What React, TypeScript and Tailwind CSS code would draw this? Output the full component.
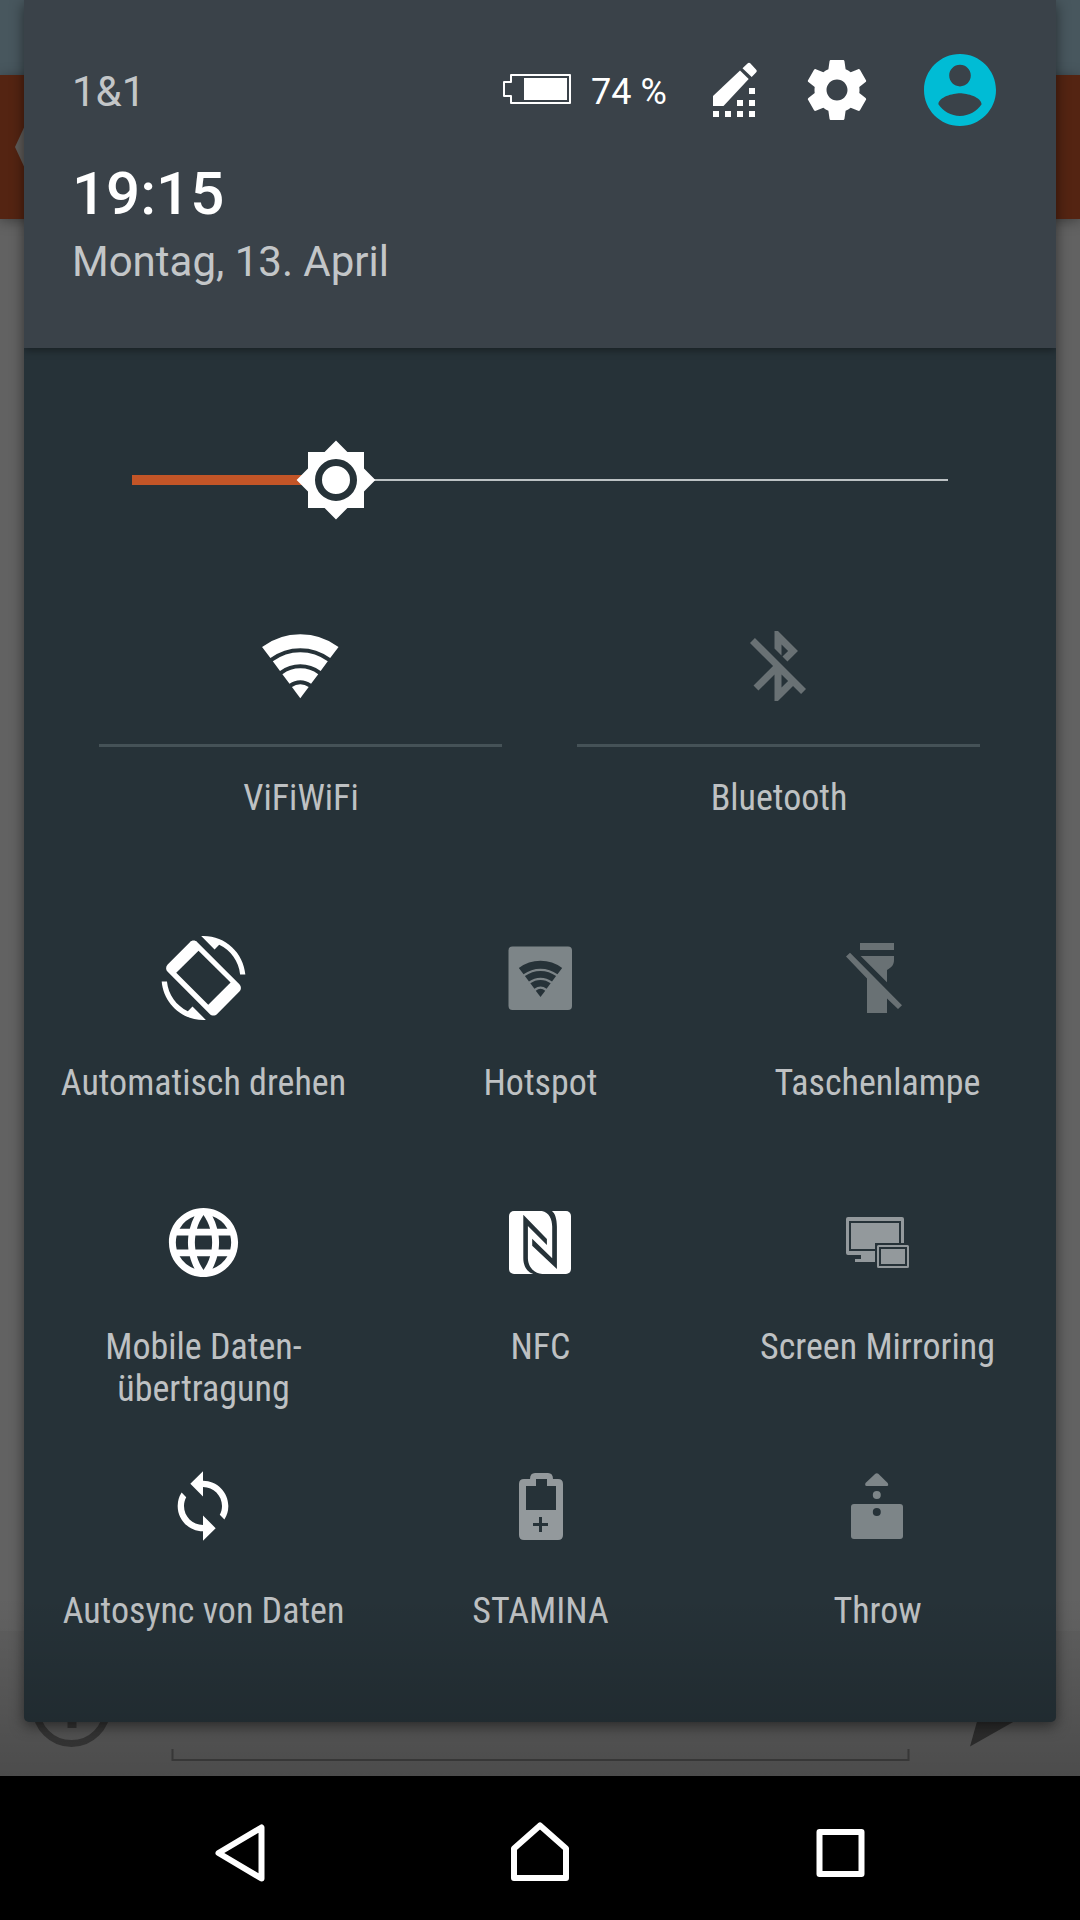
import type { ReactNode } from "react"
import { clsx } from "clsx"
import { MdBluetoothDisabled, MdLanguage, MdSync } from "react-icons/md"

function WifiFan() {
  // Four bands around an apex at 0,0; outer radius 64
  return (
    <g fill="none" stroke="currentColor">
      <path d="M-34.06 -45.7A57 57 0 0 1 34.06 -45.7" strokeWidth="14" />
      <path d="M-23.9 -32.07A40 40 0 0 1 23.9 -32.07" strokeWidth="12" />
      <path d="M-14.34 -19.24A24 24 0 0 1 14.34 -19.24" strokeWidth="12" />
      <path d="M0 0L-8.37 -11.22A14 14 0 0 1 8.37 -11.22Z" fill="currentColor" stroke="none" />
    </g>
  )
}

function WifiIcon() {
  return (
    <svg width="84" height="84" viewBox="0 0 84 84">
      <g transform="translate(42.3 74.2)">
        <WifiFan />
      </g>
    </svg>
  )
}

function HotspotIcon() {
  return (
    <svg width="84" height="84" viewBox="0 0 84 84">
      <rect x="10.5" y="10.5" width="63.5" height="63.5" rx="4" fill="currentColor" />
      <g className="text-[#263238]" transform="translate(42.5 61) scale(0.567)">
        <WifiFan />
      </g>
    </svg>
  )
}

function RotateIcon() {
  return (
    <svg width="84" height="84" viewBox="-0.15 0 24 24" fill="currentColor" fillRule="evenodd" overflow="visible">
      <path d="M16.48 2.52c3.27 1.55 5.61 4.72 5.97 8.48h1.5C23.44 4.84 18.29 0 12 0l-.66.03 3.81 3.81 1.33-1.32z" />
      <path d="M7.52 21.48C4.25 19.94 1.91 16.76 1.55 13H.05C.56 19.16 5.71 24 12 24l.66-.03-3.81-3.81-1.33 1.32z" />
      <path d="M10.23 1.75c-.59-.59-1.54-.59-2.12 0L1.75 8.11c-.59.59-.59 1.54 0 2.12l12.02 12.02c.59.59 1.54.59 2.12 0l6.36-6.36c.59-.59.59-1.54 0-2.12L10.23 1.75zM10.57 4.2L4.2 10.5l9.15 9.15 6.38-6.4z" />
    </svg>
  )
}

function TorchOffIcon() {
  return (
    <svg width="84" height="84" viewBox="0 0 84 84" fill="currentColor">
      <path d="M25 7H59V14H25Z" />
      <path d="M25.7 20H59V24C59 29 56.5 31.5 52 34V46.3Z" />
      <path d="M11 20.5L15 16.7L67 69.2L63 73L52 62.5V77H32V42.5Z" />
    </svg>
  )
}

function NfcIcon() {
  return (
    <svg width="84" height="84" viewBox="0 0 84 84">
      <g transform="translate(11 11)">
        <rect width="62" height="63" rx="5" fill="currentColor" />
        <path
          className="fill-[#263238]"
          d="M14.3 3.7L37.9 28V33.9L18.9 15V47.3C18.9 55 24 62 33.2 63H24.3C17.5 61 14.3 54 14.3 47.3Z"
        />
        <path
          className="fill-[#263238]"
          d="M47.9 58L23.2 34.7V27.7L43.2 47.3V15.7C43.2 8 40 1.5 32.9 0H42.9C46 2 47.9 8 47.9 15.7Z"
        />
      </g>
    </svg>
  )
}

function MirrorIcon() {
  return (
    <svg width="84" height="84" viewBox="0 0 84 84" fill="currentColor" fillRule="evenodd">
      <g transform="translate(11 17)">
        <path d="M2 0H56Q58 0 58 2V26H55V4H3V34H29V45H9V42H15V38H2Q0 38 0 36V2Q0 0 2 0Z" />
        <path d="M5 6H53V26H29V32H5Z" />
        <path d="M32.5 28H61.5Q63 28 63 29.5V49.5Q63 51 61.5 51H32.5Q31 51 31 49.5V29.5Q31 28 32.5 28ZM33 30V49H61V30Z" />
        <path d="M35 32H59V47H35Z" />
      </g>
    </svg>
  )
}

function StaminaIcon() {
  return (
    <svg width="84" height="84" viewBox="0 0 84 84" fill="currentColor" fillRule="evenodd">
      <path
        transform="translate(21 9)"
        d="M16 0H29Q34 0 34 6H39Q44 6 44 11V62Q44 67 39 67H5Q0 67 0 62V11Q0 6 5 6H11Q11 0 16 0ZM17 6V13H7V37H37V13H28V6ZM20 44V50H14V53H20V59H23V53H29V50H23V44Z"
      />
    </svg>
  )
}

function ThrowIcon() {
  return (
    <svg width="84" height="84" viewBox="0 0 84 84" fill="currentColor">
      <g transform="translate(16 9)">
        <path d="M24.3 .7Q25.8 -.3 27.3 .7L36.7 10Q38 13 36 13H15.6Q13.5 13 14.5 10Z" />
        <circle cx="25.8" cy="22" r="4" />
        <rect y="31" width="52" height="35" rx="3" />
        <circle className="fill-[#263238]" cx="25.8" cy="39" r="4" />
      </g>
    </svg>
  )
}

function BatteryIcon() {
  return (
    <svg width="68" height="30" viewBox="0 0 68 30" fill="none">
      <path d="M8 1H67V29H8V22H1V8H8Z" stroke="white" strokeWidth="2" strokeLinejoin="round" />
      <path d="M21 4H64V26H21Z" fill="white" />
    </svg>
  )
}

function EditIcon() {
  return (
    <svg width="44" height="56" viewBox="0 0 44 56" fill="white">
      <path d="M0 34L27 8.5L35.7 17L10.5 44H0Z" />
      <path d="M34.5 1.5Q36 0 37.5 1.5L43 7.5Q44.5 9 43 10.5L38.7 15L29.5 6.2Z" />
      <path d="M36 26h6v6h-6zM24 38h6v6h-6zM36 38h6v6h-6zM0 49h6v6h-6zM12 49h6v6h-6zM24 49h6v6h-6zM36 49h6v6h-6z" />
    </svg>
  )
}

function GearIcon() {
  return (
    <svg width="60" height="60" viewBox="2 2 20 20" fill="white">
      <path d="M19.43 12.98c.04-.32.07-.64.07-.98s-.03-.66-.07-.98l2.11-1.65c.19-.15.24-.42.12-.64l-2-3.46c-.12-.22-.39-.3-.61-.22l-2.49 1c-.52-.4-1.08-.73-1.69-.98l-.38-2.65C14.46 2.18 14.25 2 14 2h-4c-.25 0-.46.18-.49.42l-.38 2.65c-.61.25-1.17.59-1.69.98l-2.49-1c-.23-.09-.49 0-.61.22l-2 3.46c-.13.22-.07.49.12.64l2.11 1.65c-.04.32-.07.65-.07.98s.03.66.07.98l-2.11 1.65c-.19.15-.24.42-.12.64l2 3.46c.12.22.39.3.61.22l2.49-1c.52.4 1.08.73 1.69.98l.38 2.65c.03.24.24.42.49.42h4c.25 0 .46-.18.49-.42l.38-2.65c.61-.25 1.17-.59 1.69-.98l2.49 1c.23.09.49 0 .61-.22l2-3.46c.12-.22.07-.49-.12-.64l-2.11-1.65zM12 15.5c-1.93 0-3.5-1.57-3.5-3.5s1.57-3.5 3.5-3.5 3.5 1.57 3.5 3.5-1.57 3.5-3.5 3.5z" />
    </svg>
  )
}

function AccountIcon() {
  return (
    <svg width="72" height="72" viewBox="2 2 20 20" fill="#00bcd5">
      <path d="M12 2C6.48 2 2 6.48 2 12s4.48 10 10 10 10-4.48 10-10S17.52 2 12 2zm0 3c1.66 0 3 1.34 3 3s-1.34 3-3 3-3-1.34-3-3 1.34-3 3-3zm0 14.2c-2.5 0-4.71-1.28-6-3.22.03-1.99 4-3.08 6-3.08 1.99 0 5.97 1.09 6 3.08-1.29 1.94-3.5 3.22-6 3.22z" />
    </svg>
  )
}

const labelClass =
  "pl-px text-center font-['Roboto_Condensed','Roboto',sans-serif] font-stretch-75% text-[36px] leading-[42px] text-[#bec1c3] whitespace-pre-line"

interface Tile {
  label: string
  icon: ReactNode
  color: string
}

const wideTiles: Tile[] = [
  { label: "ViFiWiFi", icon: <WifiIcon />, color: "text-white" },
  { label: "Bluetooth", icon: <MdBluetoothDisabled size={84} />, color: "text-[#697174]" },
]

const tiles: Tile[] = [
  { label: "Automatisch drehen", icon: <RotateIcon />, color: "text-white" },
  { label: "Hotspot", icon: <HotspotIcon />, color: "text-[#7d8588]" },
  { label: "Taschenlampe", icon: <TorchOffIcon />, color: "text-[#697174]" },
  { label: "Mobile Daten-\nübertragung", icon: <MdLanguage size={83} />, color: "text-white" },
  { label: "NFC", icon: <NfcIcon />, color: "text-white" },
  { label: "Screen Mirroring", icon: <MirrorIcon />, color: "text-[#93999c]" },
  { label: "Autosync von Daten", icon: <MdSync size={76} />, color: "text-white" },
  { label: "STAMINA", icon: <StaminaIcon />, color: "text-[#93999c]" },
  { label: "Throw", icon: <ThrowIcon />, color: "text-[#7d8588]" },
]

function Header() {
  return (
    <header className="relative z-10 h-[348px] bg-[#3a4249] pl-[48px] pt-[54px] shadow-[0_2px_8px_rgba(0,0,0,0.4)]">
      <div className="flex h-[72px] items-center pr-[60px] text-white">
        <span className="pt-[3px] text-[42px] leading-[48px] text-[#c3c6c8]">1&amp;1</span>
        <div className="ml-auto flex items-center">
          <div className="pb-[2px]">
            <BatteryIcon />
          </div>
          <span className="ml-[20px] w-[75px] whitespace-nowrap pt-[4px] text-[36px] leading-[42px]">
            74 %
          </span>
          <div className="ml-[47px]">
            <EditIcon />
          </div>
          <div className="ml-[50px]">
            <GearIcon />
          </div>
          <div className="ml-[57px]">
            <AccountIcon />
          </div>
        </div>
      </div>
      <p className="mt-[32px] text-[60px] font-medium leading-[72px] text-white">19:15</p>
      <p className="mt-[8px] text-[42px] leading-[48px] text-[#c3c6c8]">Montag, 13. April</p>
    </header>
  )
}

function BrightnessSlider({ value }: { value: number }) {
  return (
    <div className="relative mx-[108px] mt-[90px] flex h-[84px] items-center">
      <div className="h-[10px] bg-[#c35527]" style={{ width: `${value}%` }} />
      <div className="h-[2px] flex-1 bg-[#bcc2c4]" />
      <svg
        className="absolute top-0 -translate-x-1/2"
        style={{ left: `${value}%` }}
        width="84"
        height="84"
        viewBox="-42 -42 84 84"
      >
        <path
          d="M-28 -28H-11.4L0 -39.4L11.4 -28H28V-11.4L39.4 0L28 11.4V28H11.4L0 39.4L-11.4 28H-28V11.4L-39.4 0L-28 -11.4Z"
          fill="white"
        />
        <circle r="17.5" fill="none" stroke="#263238" strokeWidth="7" />
      </svg>
    </div>
  )
}

function NavigationBar() {
  return (
    <nav className="flex h-[144px] items-center justify-center gap-[216px] bg-black pt-[16px]">
      <svg width="84" height="84" viewBox="0 0 84 84" fill="none" stroke="white" strokeWidth="6" strokeLinejoin="round">
        <path d="M63.5 13.5V64.5L20.5 39Z" />
      </svg>
      <svg width="84" height="84" viewBox="0 0 84 84" fill="none" stroke="white" strokeWidth="6" strokeLinejoin="round">
        <path d="M42 11.5L68 34.5V64H16V34.5Z" />
      </svg>
      <svg width="84" height="84" viewBox="0 0 84 84" fill="none" stroke="white" strokeWidth="6" strokeLinejoin="round">
        <path d="M21.5 18H63.5V60H21.5Z" />
      </svg>
    </nav>
  )
}

function DimmedApp() {
  return (
    <div className="flex h-[1776px] flex-col">
      <div className="h-[75px] bg-[#48575e]" />
      <div className="relative h-[144px] bg-[#542412] shadow-[0_2px_12px_rgba(0,0,0,0.35)]">
        <svg className="absolute left-[15px] top-[46px]" width="26" height="52" viewBox="0 0 26 52">
          <path d="M0 26L12 0H26V52H12Z" fill="#5f5c59" />
        </svg>
      </div>
      <div className="flex-1 bg-[#626262]" />
      <div className="relative h-[145px] bg-[#5f5f5f]">
        <svg width="1080" height="145" viewBox="0 1631 1080 145" fill="none">
          <circle cx="71.5" cy="1708" r="35.5" stroke="#3c3c3c" strokeWidth="7" />
          <path d="M67.5 1690H76.5V1728H67.5Z" fill="#3c3c3c" />
          <path d="M172.5 1749V1760H908.5V1749" stroke="#434343" strokeWidth="2" />
          <path d="M983 1700L1045 1704L970 1746.5Z" fill="#333333" />
        </svg>
        <span className="absolute left-[202px] top-[58px] text-[36px] leading-[42px] text-[#454545]">
          Schreib eine Nachricht
        </span>
      </div>
    </div>
  )
}

export default function App() {
  return (
    <div className="relative h-[1920px] w-[1080px] overflow-hidden font-['Roboto',sans-serif]">
      <DimmedApp />
      <NavigationBar />

      {/* Quick settings shade */}
      <section className="absolute left-[24px] top-0 h-[1722px] w-[1032px] overflow-clip rounded-b-[5px] bg-[#263238] shadow-[0_4px_14px_rgba(0,0,0,0.5)]">
        <Header />
        <BrightnessSlider value={25} />

        <div className="mt-[102px] flex justify-center gap-[75px] pr-[2px]">
          {wideTiles.map((tile) => (
            <div key={tile.label} className="flex w-[403px] flex-col items-center">
              <div className={clsx("h-[84px]", tile.color)}>{tile.icon}</div>
              <div className="mt-[36px] h-[3px] w-full bg-[#455257]" />
              <span className={clsx("ml-px mt-[30px]", labelClass)}>{tile.label}</span>
            </div>
          ))}
        </div>

        <div className="mx-auto mt-[117px] grid w-[1011px] auto-rows-[264px] grid-cols-3">
          {tiles.map((tile) => (
            <div key={tile.label} className="flex flex-col items-center">
              <div className={clsx("flex h-[84px] items-center", tile.color)}>{tile.icon}</div>
              <span className={clsx("mt-[42px]", labelClass)}>{tile.label}</span>
            </div>
          ))}
        </div>
      </section>

      {/* Scrim above the navigation bar */}
      <div className="absolute left-0 top-[1596px] h-[180px] w-full bg-linear-to-b from-transparent to-black/20" />
    </div>
  )
}
